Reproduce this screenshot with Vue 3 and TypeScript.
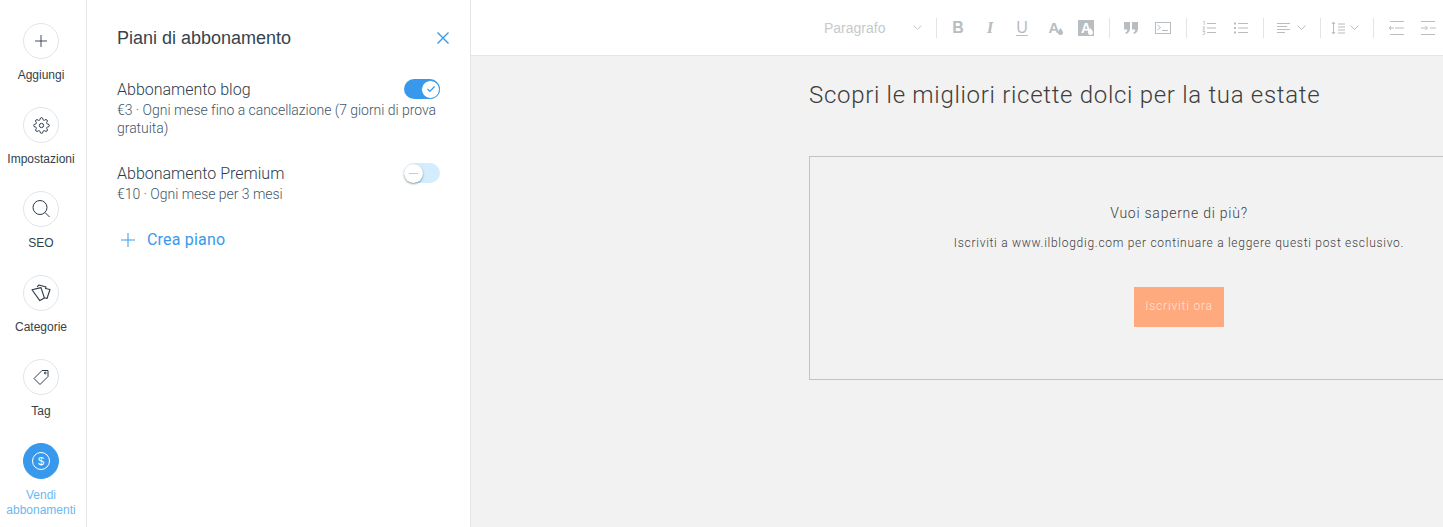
<script setup lang="ts">
const railItems = [
  { label: 'Aggiungi', icon: 'plus' },
  { label: 'Impostazioni', icon: 'gear' },
  { label: 'SEO', icon: 'search' },
  { label: 'Categorie', icon: 'cards' },
  { label: 'Tag', icon: 'tag' },
  { label: 'Vendi abbonamenti', icon: 'dollar', active: true },
]
</script>

<template>
  <div class="app">
    <nav class="rail">
      <div v-for="item in railItems" :key="item.label" class="rail-item" :class="{ active: item.active }">
        <div class="rail-circle">
          <svg v-if="item.icon === 'plus'" width="14" height="14" viewBox="0 0 14 14" fill="none" stroke="currentColor" stroke-width=".9"><path d="M7 1v12M1 7h12" /></svg>
          <svg v-else-if="item.icon === 'gear'" width="17" height="17" viewBox="0 0 24 24" fill="none" stroke="currentColor" stroke-width="1.4">
            <circle cx="12" cy="12" r="3" />
            <path d="M19.4 15a1.65 1.65 0 0 0 .33 1.82l.06.06a2 2 0 0 1 0 2.83 2 2 0 0 1-2.83 0l-.06-.06a1.65 1.65 0 0 0-1.82-.33 1.65 1.65 0 0 0-1 1.51V21a2 2 0 0 1-2 2 2 2 0 0 1-2-2v-.09A1.65 1.65 0 0 0 9 19.4a1.65 1.65 0 0 0-1.82.33l-.06.06a2 2 0 0 1-2.83 0 2 2 0 0 1 0-2.83l.06-.06a1.65 1.65 0 0 0 .33-1.82 1.65 1.65 0 0 0-1.51-1H3a2 2 0 0 1-2-2 2 2 0 0 1 2-2h.09A1.65 1.65 0 0 0 4.6 9a1.65 1.65 0 0 0-.33-1.82l-.06-.06a2 2 0 0 1 0-2.83 2 2 0 0 1 2.83 0l.06.06a1.65 1.65 0 0 0 1.82.33H9a1.65 1.65 0 0 0 1-1.51V3a2 2 0 0 1 2-2 2 2 0 0 1 2 2v.09a1.65 1.65 0 0 0 1 1.51 1.65 1.65 0 0 0 1.82-.33l.06-.06a2 2 0 0 1 2.83 0 2 2 0 0 1 0 2.83l-.06.06a1.65 1.65 0 0 0-.33 1.82V9a1.65 1.65 0 0 0 1.51 1H21a2 2 0 0 1 2 2 2 2 0 0 1-2 2h-.09a1.65 1.65 0 0 0-1.51 1z" />
          </svg>
          <svg v-else-if="item.icon === 'search'" width="20" height="20" viewBox="0 0 20 20" fill="none" stroke="currentColor" stroke-width="1"><circle cx="9" cy="8.500" r="7" /><path d="M14 13.500l4.500 4.500" /></svg>
          <svg v-else-if="item.icon === 'cards'" width="20" height="18" viewBox="0 0 20 18" fill="none" stroke="currentColor" stroke-width="1.100" stroke-linejoin="round">
            <path d="M6 2.800L8 1l7 2-.5 1.500 4.500 1-3 9-2.500-.7" />
            <path d="M1 5.800l9-2.200 3.400 10.400-4.600 2.600z" />
          </svg>
          <svg v-else-if="item.icon === 'tag'" width="18" height="18" viewBox="0 0 18 18" fill="none" stroke="currentColor" stroke-width="1" stroke-linejoin="round">
            <path d="M10 2.500h6v6L8 16.500 2 10.500z" /><circle cx="13.300" cy="5" r=".9" />
          </svg>
          <svg v-else width="20" height="20" viewBox="0 0 20 20" fill="none" stroke="#fff">
            <circle cx="10" cy="10" r="8.500" />
            <text x="10" y="14" text-anchor="middle" class="dollar" fill="#fff" stroke="none">$</text>
          </svg>
        </div>
        <span class="rail-label">{{ item.label }}</span>
      </div>
    </nav>

    <aside class="panel">
      <header class="panel-head">
        <h2 class="panel-title">Piani di abbonamento</h2>
        <svg class="close" width="14" height="14" viewBox="0 0 14 14" fill="none" stroke="#3899ec" stroke-width="1.400"><path d="M1.500 1.500l11 11M12.500 1.500l-11 11" /></svg>
      </header>

      <section class="plan plan-first">
        <div class="plan-top">
          <span class="plan-name">Abbonamento blog</span>
          <span class="toggle on">
            <span class="knob">
              <svg width="10" height="8" viewBox="0 0 10 8" fill="none" stroke="#3899ec" stroke-width="1.300"><path d="M1.500 4l2.400 2.400L8.500 1.500" /></svg>
            </span>
          </span>
        </div>
        <p class="plan-desc">€3 · Ogni mese fino a cancellazione (7 giorni di prova gratuita)</p>
      </section>

      <section class="plan">
        <div class="plan-top">
          <span class="plan-name">Abbonamento Premium</span>
          <span class="toggle off">
            <span class="knob"><i class="minus"></i></span>
          </span>
        </div>
        <p class="plan-desc">€10 · Ogni mese per 3 mesi</p>
      </section>

      <div class="create">
        <svg width="14" height="14" viewBox="0 0 14 14" fill="none" stroke="#3899ec"><path d="M7 0v14M0 7h14" /></svg>
        <span>Crea piano</span>
      </div>
    </aside>

    <main class="main">
      <div class="toolbar">
        <div class="format">
          <span>Paragrafo</span>
          <svg class="chev" width="9" height="5" viewBox="0 0 9 5" fill="none" stroke="currentColor"><path d="M.5.5l4 4 4-4" /></svg>
        </div>
        <i class="sep"></i>
        <span class="tool t-b">B</span>
        <span class="tool t-i">I</span>
        <span class="tool t-u">U</span>
        <span class="tool t-a">A<svg class="drop" width="5" height="7" viewBox="0 0 5 7"><path d="M2.500 0C3.600 2 5 3 5 4.500a2.500 2.500 0 0 1-5 0C0 3 1.400 2 2.500 0z" fill="currentColor" /></svg></span>
        <span class="tool"><span class="t-box">A<svg class="drop-box" width="5" height="7" viewBox="0 0 5 7"><path d="M2.500 0C3.600 2 5 3 5 4.500a2.500 2.500 0 0 1-5 0C0 3 1.400 2 2.500 0z" fill="#fff" /></svg></span></span>
        <i class="sep sep-a"></i>
        <span class="tool">
          <svg width="14" height="12" viewBox="0 0 14 12" fill="currentColor"><path d="M0 0h6v6.500C6 9.500 4.500 11 2 12l-.7-1.400C2.600 10 3.200 9 3.300 7.500H0zM8 0h6v6.500C14 9.500 12.500 11 10 12l-.7-1.400c1.300-.6 1.900-1.600 2-3.100H8z" /></svg>
        </span>
        <span class="tool">
          <svg width="16" height="12" viewBox="0 0 16 12" fill="none" stroke="currentColor"><rect x=".5" y=".5" width="15" height="11" /><path d="M2.500 3l3 2.500-3 2.500M7 8.500h6" /></svg>
        </span>
        <i class="sep sep-b"></i>
        <span class="tool">
          <svg width="14" height="14" viewBox="0 0 14 14" fill="none" stroke="currentColor"><path d="M5 2.500h9M5 7h9M5 11.500h9" /><path d="M1 .5h1.200v3.500M.5 6h2.500L.8 9h2.200M.7 10.500h2.300l-1 1.200c1 0 1 1.800-.1 1.800H.7" stroke-width=".8" /></svg>
        </span>
        <span class="tool">
          <svg width="14" height="12" viewBox="0 0 14 12" fill="none" stroke="currentColor"><path d="M4 1.500h10M4 6h10M4 10.500h10" /><path d="M0 1.500h2M0 6h2M0 10.500h2" stroke-width="2" /></svg>
        </span>
        <i class="sep"></i>
        <span class="tool wide w-align">
          <svg width="13" height="10" viewBox="0 0 13 10" fill="none" stroke="currentColor"><path d="M0 .5h13M0 3.500h10M0 6.500h13M0 9.500h8" /></svg>
          <svg class="chev-sm" width="9" height="5" viewBox="0 0 9 5" fill="none" stroke="currentColor"><path d="M.5.5l4 4 4-4" /></svg>
        </span>
        <i class="sep"></i>
        <span class="tool wide w-line">
          <svg width="14" height="14" viewBox="0 0 14 14" fill="none" stroke="currentColor"><path d="M2.500 1v12M.8 3l1.700-2 1.700 2M.8 11l1.700 2 1.700-2M7 3h7M7 6h7M7 9h7M7 12h7" /></svg>
          <svg class="chev-sm" width="9" height="5" viewBox="0 0 9 5" fill="none" stroke="currentColor"><path d="M.5.5l4 4 4-4" /></svg>
        </span>
        <i class="sep sep-d"></i>
        <span class="tool">
          <svg width="15" height="14" viewBox="0 0 15 14" fill="none" stroke="currentColor"><path d="M1 .5h14M1 13.500h14M6 7h9" /><path d="M0 7h5M2 5L.5 7 2 9" /></svg>
        </span>
        <span class="tool">
          <svg width="15" height="14" viewBox="0 0 15 14" fill="none" stroke="currentColor"><path d="M0 .5h14M0 13.500h14M9 7h6" /><path d="M0 7h6M4.500 5L6.500 7 4.500 9" /></svg>
        </span>
      </div>

      <div class="canvas">
        <h1 class="post-title">Scopri le migliori ricette dolci per la tua estate</h1>
        <div class="paywall">
          <p class="pay-title">Vuoi saperne di più?</p>
          <p class="pay-text">Iscriviti a www.ilblogdig.com per continuare a leggere questi post esclusivo.</p>
          <div class="pay-btn">Iscriviti ora</div>
        </div>
      </div>
    </main>
  </div>
</template>

<style scoped>
.app {
  display: flex;
  width: 1443px;
  height: 527px;
  overflow: hidden;
  background: #fff;
  font-family: "Liberation Sans", Arial, sans-serif;
}

/* rail */
.rail {
  flex: none;
  box-sizing: border-box;
  width: 87px;
  padding-top: 23px;
  border-right: 1px solid #e6e9ec;
  display: flex;
  flex-direction: column;
}
.rail-item {
  width: 82px;
  height: 84px;
  display: flex;
  flex-direction: column;
  align-items: center;
  gap: 9px;
  color: #2b3b4a;
}
.rail-circle {
  box-sizing: border-box;
  width: 36px;
  height: 36px;
  flex: none;
  border: 1px solid #dfe5eb;
  border-radius: 50%;
  display: flex;
  align-items: center;
  justify-content: center;
}
.rail-label {
  font-size: 12px;
  line-height: 15px;
  text-align: center;
  color: #333f4b;
}
.rail-item.active .rail-circle {
  background: #3899ec;
  border-color: #3899ec;
}
.rail-item.active .rail-label {
  color: #6db8f2;
  width: 76px;
}
.dollar {
  font-family: "Liberation Sans", Arial, sans-serif;
  font-size: 11px;
}

/* panel */
.panel {
  flex: none;
  box-sizing: border-box;
  width: 384px;
  padding: 0 30px;
  border-right: 1px solid #e3e6e9;
  font-family: Roboto, "Liberation Sans", sans-serif;
}
.panel-head {
  height: 76px;
  display: flex;
  align-items: center;
  justify-content: space-between;
}
.panel-title {
  margin: 0;
  font-family: "Liberation Sans", Arial, sans-serif;
  font-size: 18px;
  font-weight: 400;
  color: #34444f;
}
.close {
  margin-right: -10px;
}
.plan {
  margin-top: 26px;
}
.plan-first {
  margin-top: 3px;
}
.plan-top {
  display: flex;
  align-items: center;
  justify-content: space-between;
  height: 20px;
}
.plan-name {
  font-size: 16px;
  font-weight: 300;
  color: #2b3b4a;
}
.plan-desc {
  margin: 2px 0 0;
  font-size: 14px;
  font-weight: 300;
  line-height: 18px;
  letter-spacing: -.04px;
  color: #42566a;
}
.toggle {
  box-sizing: border-box;
  width: 36px;
  height: 20px;
  border-radius: 10px;
  display: flex;
  align-items: center;
}
.toggle.on {
  background: #3899ec;
  justify-content: flex-end;
}
.toggle.off {
  background: #d3edff;
  justify-content: flex-start;
}
.knob {
  box-sizing: border-box;
  width: 19px;
  height: 19px;
  border-radius: 50%;
  background: #fff;
  display: flex;
  align-items: center;
  justify-content: center;
}
.toggle.on .knob {
  border: 1px solid #3899ec;
}
.toggle.off .knob {
  box-shadow: 0 1px 2px rgba(22, 45, 61, .5);
}
.minus {
  width: 9px;
  height: 1px;
  background: #c4ccd3;
}
.create {
  margin-top: 27px;
  margin-left: 4px;
  display: flex;
  align-items: center;
  gap: 12px;
  color: #3899ec;
  font-size: 16px;
  letter-spacing: .2px;
}

/* main */
.main {
  flex: 1;
  min-width: 0;
  background: #f2f2f2;
  display: flex;
  flex-direction: column;
}
.toolbar {
  flex: none;
  box-sizing: border-box;
  height: 56px;
  padding-left: 353px;
  background: #fff;
  border-bottom: 1px solid #e3e6e9;
  display: flex;
  align-items: center;
  color: #b8bdc1;
}
.format {
  flex: none;
  width: 106px;
  display: flex;
  align-items: center;
  justify-content: space-between;
  padding-right: 8px;
  box-sizing: border-box;
  font-size: 14px;
  color: #c6cacd;
}
.sep {
  flex: none;
  width: 1px;
  height: 20px;
  background: #e2e4e6;
  margin: 0 5px 0 6px;
}
.sep-a {
  margin-left: 7px;
}
.sep-b {
  margin: 0 6px 0 7px;
}
.sep-d {
  margin-right: 6px;
}
.tool {
  flex: none;
  width: 32px;
  height: 24px;
  display: flex;
  align-items: center;
  justify-content: center;
  position: relative;
}
.t-b {
  font-size: 16px;
  font-weight: 700;
}
.t-i {
  font-family: "Liberation Serif", serif;
  font-size: 17px;
  font-style: italic;
  font-weight: 700;
}
.t-u {
  font-size: 16px;
  text-decoration: underline;
  text-underline-offset: 2px;
}
.t-a {
  font-size: 15px;
  font-weight: 700;
}
.drop {
  position: absolute;
  left: 20px;
  bottom: 5px;
}
.t-box {
  position: relative;
  width: 16px;
  height: 16px;
  background: #b8bdc1;
  color: #fff;
  font-size: 14px;
  font-weight: 700;
  line-height: 16px;
  text-align: center;
}
.drop-box {
  position: absolute;
  right: 1px;
  bottom: 1px;
}
.wide {
  justify-content: flex-start;
  box-sizing: border-box;
}
.w-align {
  width: 45px;
  padding-left: 8px;
  gap: 7px;
}
.w-line {
  width: 41px;
  padding-left: 5px;
  gap: 5px;
}

/* canvas */
.canvas {
  flex: 1;
  padding-left: 338px;
}
.post-title {
  margin: 24px 0 0;
  font-family: Roboto, "Liberation Sans", sans-serif;
  font-size: 24px;
  line-height: 30px;
  font-weight: 300;
  letter-spacing: .7px;
  color: #3d3d3d;
  white-space: nowrap;
}
.paywall {
  box-sizing: border-box;
  width: 740px;
  height: 224px;
  margin-top: 46px;
  border: 1px solid #c4c4c4;
  display: flex;
  flex-direction: column;
  align-items: center;
  font-family: Roboto, "Liberation Sans", sans-serif;
  font-weight: 300;
  color: #3d3d3d;
}
.pay-title {
  margin: 47px 0 0;
  font-size: 14px;
  line-height: 18px;
  letter-spacing: .75px;
}
.pay-text {
  margin: 12px 0 0;
  font-size: 12px;
  line-height: 18px;
  letter-spacing: .72px;
}
.pay-btn {
  width: 90px;
  height: 40px;
  margin-top: 35px;
  background: #ffa97f;
  color: #ffe3d5;
  font-size: 12px;
  letter-spacing: .8px;
  line-height: 38px;
  text-align: center;
}
</style>
